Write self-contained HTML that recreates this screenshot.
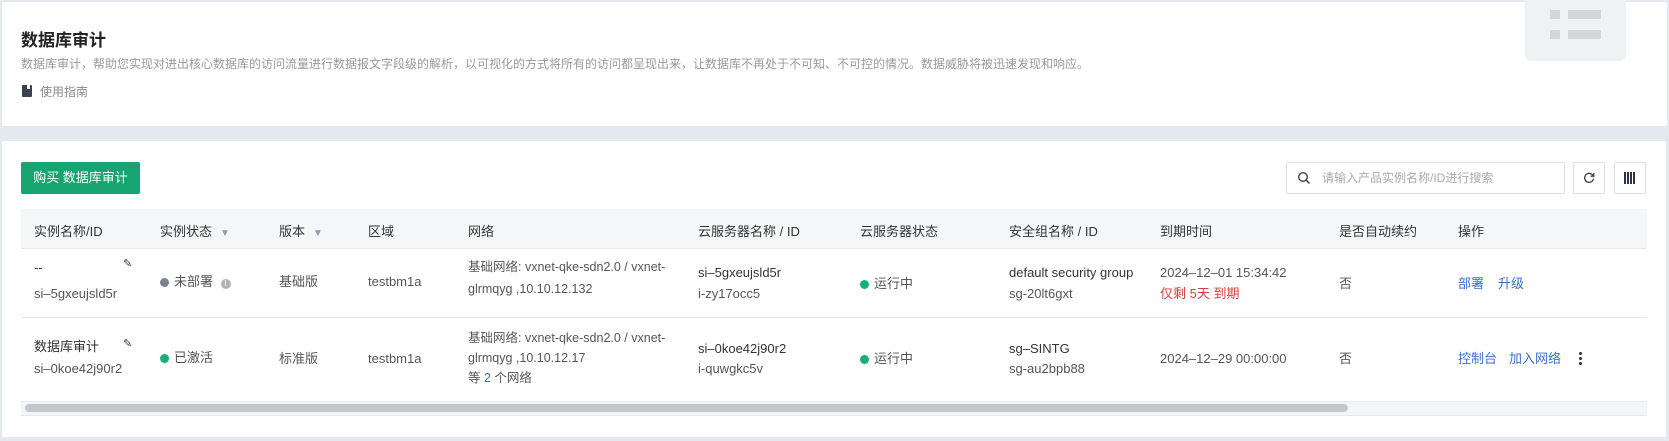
<!DOCTYPE html>
<html><head><meta charset="utf-8"><style>
*{margin:0;padding:0;box-sizing:border-box}
body{width:1669px;height:441px;background:#e4e9ef;font-family:"Liberation Sans","Noto Sans CJK SC",sans-serif;color:#333;position:relative;overflow:hidden}
.abs{position:absolute;white-space:nowrap}
.card{position:absolute;background:#fff;border-radius:2px}
.t{font-size:13px;line-height:20px}
.h{font-size:13px;color:#333;top:221px}
.g{color:#555}
.dot{display:inline-block;width:9px;height:9px;border-radius:50%;margin-right:5px;vertical-align:-1px}
.lk{color:#3a6fcf}
.filt{display:inline-block;margin-left:8px;color:#99a;font-size:10px}
</style></head><body>
<div class="card" style="left:2px;top:2px;width:1665px;height:124px"></div>
<div class="abs" style="left:1525px;top:0;width:101px;height:61px;background:#f0f1f3;border-radius:0 0 6px 6px"></div>
<div class="abs" style="left:1550px;top:10px;width:10px;height:9px;background:#d3d6db"></div>
<div class="abs" style="left:1568px;top:10px;width:33px;height:9px;background:#d3d6db"></div>
<div class="abs" style="left:1550px;top:30px;width:10px;height:9px;background:#d3d6db"></div>
<div class="abs" style="left:1568px;top:30px;width:33px;height:9px;background:#d3d6db"></div>
<div class="abs" style="left:21px;top:26px;font-size:17px;font-weight:bold;color:#222">数据库审计</div>
<div class="abs" style="left:21px;top:55px;font-size:12px;color:#999">数据库审计，帮助您实现对进出核心数据库的访问流量进行数据报文字段级的解析，以可视化的方式将所有的访问都呈现出来，让数据库不再处于不可知、不可控的情况。数据威胁将被迅速发现和响应。</div>
<div class="abs" style="left:22px;top:85px;width:10px;height:12px;background:#3a4250;border-radius:1px"></div>
<div class="abs" style="left:27px;top:85px;width:3px;height:4px;background:#fff"></div>
<div class="abs" style="left:40px;top:83px;font-size:12px;color:#888">使用指南</div>

<div class="card" style="left:2px;top:141px;width:1664px;height:296px"></div>
<div class="abs" style="left:21px;top:162px;width:119px;height:32px;background:#18a470;border-radius:2px;color:#fff;font-size:13px;line-height:32px;text-align:center">购买 数据库审计</div>
<div class="abs" style="left:1286px;top:162px;width:279px;height:32px;border:1px solid #dcdfe4;border-radius:2px"></div>
<svg class="abs" style="left:1297px;top:171px" width="14" height="14" viewBox="0 0 14 14"><circle cx="6" cy="6" r="4.3" fill="none" stroke="#444" stroke-width="1.4"/><path d="M9.2 9.2l3.3 3.3" stroke="#444" stroke-width="1.5"/></svg>
<div class="abs" style="left:1322px;top:169px;font-size:12px;color:#aaa">请输入产品实例名称/ID进行搜索</div>
<div class="abs" style="left:1573px;top:162px;width:32px;height:32px;border:1px solid #dcdfe4;border-radius:2px"></div>
<svg class="abs" style="left:1583px;top:172px" width="12" height="12" viewBox="0 0 12 12"><path d="M10 3.5A4.5 4.5 0 1 0 10.5 7" fill="none" stroke="#444" stroke-width="1.3"/><path d="M10.8 1v3.2H7.6" fill="none" stroke="#444" stroke-width="1.3"/></svg>
<div class="abs" style="left:1614px;top:162px;width:32px;height:32px;border:1px solid #dcdfe4;border-radius:2px"></div>
<div class="abs" style="left:1624px;top:172px;width:12px;height:12px;background:repeating-linear-gradient(90deg,#2a3140 0 2px,#fff 2px 3px)"></div>

<div class="abs" style="left:21px;top:209px;width:1626px;height:40px;background:#f4f6f8;border-bottom:1px solid #e6e8eb"></div>
<div class="abs" style="left:21px;top:317px;width:1626px;height:1px;background:#e6e8eb"></div>
<div class="abs" style="left:21px;top:401px;width:1626px;height:15px;background:#f4f5f7;border-top:1px solid #e6e8eb;border-bottom:1px solid #e6e8eb"></div>
<div class="abs" style="left:25px;top:404px;width:1323px;height:8px;background:#c4c6ca;border-radius:4px"></div>

<div class="abs h" style="left:34px">实例名称/ID</div>
<div class="abs h" style="left:160px">实例状态<span class="filt">▼</span></div>
<div class="abs h" style="left:279px">版本<span class="filt">▼</span></div>
<div class="abs h" style="left:368px">区域</div>
<div class="abs h" style="left:468px">网络</div>
<div class="abs h" style="left:698px">云服务器名称 / ID</div>
<div class="abs h" style="left:860px">云服务器状态</div>
<div class="abs h" style="left:1009px">安全组名称 / ID</div>
<div class="abs h" style="left:1160px">到期时间</div>
<div class="abs h" style="left:1339px">是否自动续约</div>
<div class="abs h" style="left:1458px">操作</div>

<!-- row1 -->
<div class="abs t" style="left:34px;top:258px">--</div>
<div class="abs t" style="left:123px;top:254px;font-size:11px">✎</div>
<div class="abs t g" style="left:34px;top:284px">si–5gxeujsld5r</div>
<div class="abs t g" style="left:160px;top:272px"><span class="dot" style="background:#7a8290"></span>未部署 <span style="display:inline-block;width:10px;height:10px;border-radius:50%;background:#b0b4ba;color:#fff;font-size:8px;line-height:10px;text-align:center;margin-left:4px;vertical-align:0">i</span></div>
<div class="abs t g" style="left:279px;top:272px">基础版</div>
<div class="abs t g" style="left:368px;top:272px">testbm1a</div>
<div class="abs t g" style="left:468px;top:257px;font-size:12.5px">基础网络: vxnet-qke-sdn2.0 / vxnet-</div>
<div class="abs t g" style="left:468px;top:279px;font-size:12.5px">glrmqyg ,10.10.12.132</div>
<div class="abs t" style="left:698px;top:263px">si–5gxeujsld5r</div>
<div class="abs t g" style="left:698px;top:284px">i-zy17occ5</div>
<div class="abs t g" style="left:860px;top:274px"><span class="dot" style="background:#18b072"></span>运行中</div>
<div class="abs t" style="left:1009px;top:263px">default security group</div>
<div class="abs t g" style="left:1009px;top:284px">sg-20lt6gxt</div>
<div class="abs t g" style="left:1160px;top:263px">2024–12–01 15:34:42</div>
<div class="abs t" style="left:1160px;top:284px;color:#d5403f">仅剩 5天 到期</div>
<div class="abs t g" style="left:1339px;top:274px">否</div>
<div class="abs t lk" style="left:1458px;top:274px">部署</div>
<div class="abs t lk" style="left:1498px;top:274px">升级</div>

<!-- row2 -->
<div class="abs t" style="left:34px;top:337px">数据库审计</div>
<div class="abs t" style="left:123px;top:334px;font-size:11px">✎</div>
<div class="abs t g" style="left:34px;top:359px">si–0koe42j90r2</div>
<div class="abs t g" style="left:160px;top:348px"><span class="dot" style="background:#18b072"></span>已激活</div>
<div class="abs t g" style="left:279px;top:349px">标准版</div>
<div class="abs t g" style="left:368px;top:349px">testbm1a</div>
<div class="abs t g" style="left:468px;top:328px;font-size:12.5px">基础网络: vxnet-qke-sdn2.0 / vxnet-</div>
<div class="abs t g" style="left:468px;top:348px;font-size:12.5px">glrmqyg ,10.10.12.17</div>
<div class="abs t g" style="left:468px;top:368px;font-size:12.5px">等 <span class="lk">2</span> 个网络</div>
<div class="abs t" style="left:698px;top:339px">si–0koe42j90r2</div>
<div class="abs t g" style="left:698px;top:359px">i-quwgkc5v</div>
<div class="abs t g" style="left:860px;top:349px"><span class="dot" style="background:#18b072"></span>运行中</div>
<div class="abs t" style="left:1009px;top:339px">sg–SINTG</div>
<div class="abs t g" style="left:1009px;top:359px">sg-au2bpb88</div>
<div class="abs t g" style="left:1160px;top:349px">2024–12–29 00:00:00</div>
<div class="abs t g" style="left:1339px;top:349px">否</div>
<div class="abs t lk" style="left:1458px;top:349px">控制台</div>
<div class="abs t lk" style="left:1509px;top:349px">加入网络</div>
<div class="abs" style="left:1579px;top:352px;width:3px;height:3px;border-radius:50%;background:#333;box-shadow:0 5px 0 #333,0 10px 0 #333"></div>
</body></html>
